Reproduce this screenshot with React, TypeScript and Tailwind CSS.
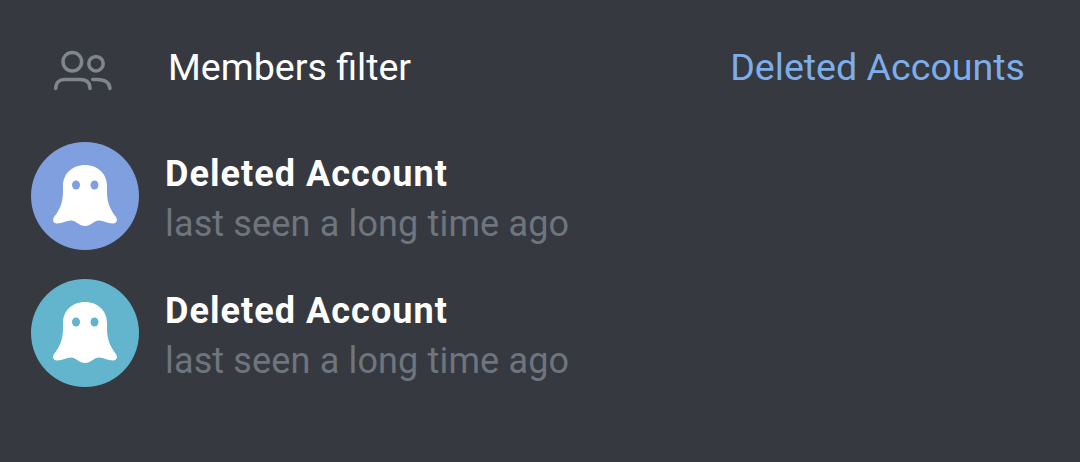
const Ghost = ({ eye }: { eye: string }) => (
  <svg width="66" height="64" viewBox="-1 -1 66 64" className="mt-[-1px]">
    <path
      d="M32 0C19 0 10 9 10 21V27C10 38 6 46 1 52C-1 55 0.500 58.500 4 58.500C10 58.500 13 55.500 18 55.500C23 55.500 26 61 32 61C38 61 41 55.500 46 55.500C51 55.500 54 58.500 60 58.500C63.500 58.500 65 55 63 52C58 46 54 38 54 27V21C54 9 45 0 32 0Z"
      fill="#fff"
    />
    <ellipse cx="23" cy="20" rx="4" ry="4.500" fill={eye} />
    <ellipse cx="41.500" cy="20" rx="4" ry="4.500" fill={eye} />
  </svg>
);

const Row = ({ color, eye }: { color: string; eye: string }) => (
  <div className="flex items-start h-[137px] pt-[14px]">
    <div className={`w-[108px] h-[108px] rounded-full ml-[31px] flex items-center justify-center ${color}`}>
      <Ghost eye={eye} />
    </div>
    <div className="ml-[26px] pt-[10px]">
      <div className="text-[36px] tracking-[1.050px] leading-[44px] font-bold text-white">Deleted Account</div>
      <div className="text-[36px] tracking-[0.150px] leading-[44px] mt-[6px] text-[#6f757d]">last seen a long time ago</div>
    </div>
  </div>
);

export default function App() {
  return (
    <div className="w-[1080px] h-[462px] bg-[#363940] font-['Roboto',sans-serif] overflow-hidden">
      <div className="flex items-center h-[128px] pt-[6px] pr-[55px]">
        <svg className="ml-[50px] mt-[5px]" width="66" height="50" viewBox="0 0 66 50" fill="none" stroke="#7f868d" strokeWidth="3.500" strokeLinecap="round">
          <circle cx="22.300" cy="16.700" r="9.300" />
          <circle cx="46" cy="18.700" r="7.200" />
          <path d="M5.700 43.500C6 37 10 34.500 14 34.500H30C36 34.500 40 37 40 43.500" />
          <path d="M42.700 34.500H47C54 34.500 59.500 37 60 43.500" />
        </svg>
        <span className="ml-[52px] text-[37.600px] text-white flex-1">Members filter</span>
        <span className="text-[37.600px] text-[#7eaeea]">Deleted Accounts</span>
      </div>
      <Row color="bg-[#7f9fdf]" eye="#7f9fdf" />
      <Row color="bg-[#63b5ce]" eye="#63b5ce" />
    </div>
  );
}
